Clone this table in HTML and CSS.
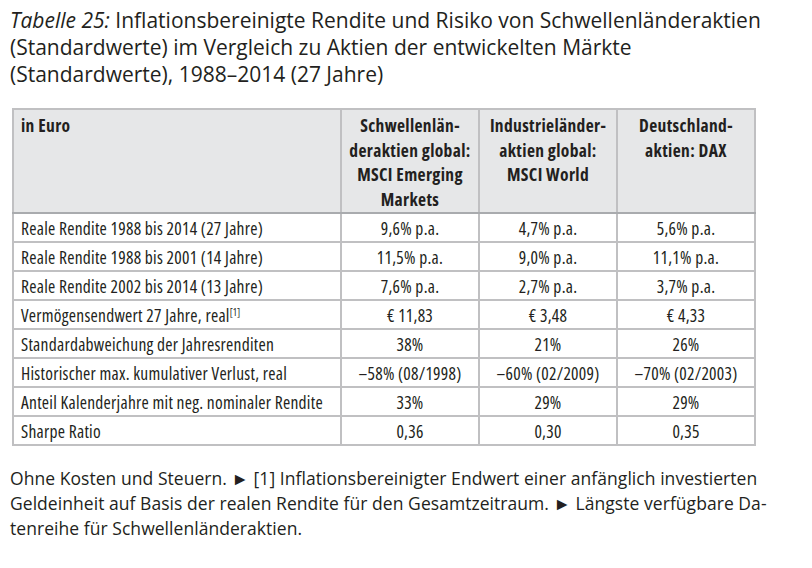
FILE: index.html
```html
<!DOCTYPE html>
<html lang="de">
<head>
<meta charset="utf-8">
<title>Tabelle 25</title>
<link rel="stylesheet" href="styles.css">
</head>
<body>
<div class="page">
  <h1 class="caption"><em>Tabelle 25:</em> Inflationsbereinigte Rendite und Risiko von Schwellenländeraktien<br>(Standardwerte) im Vergleich zu Aktien der entwickelten Märkte<br>(Standardwerte), 1988–2014 (27 Jahre)</h1>
  <table class="data">
    <colgroup>
      <col class="c-label"><col class="c-val"><col class="c-val"><col class="c-val">
    </colgroup>
    <thead>
      <tr>
        <th class="lbl">in Euro</th>
        <th>Schwellenlän-<br>deraktien global:<br>MSCI Emerging<br>Markets</th>
        <th>Industrieländer-<br>aktien global:<br>MSCI World</th>
        <th>Deutschland-<br>aktien: DAX</th>
      </tr>
    </thead>
    <tbody>
      <tr><td class="lbl">Reale Rendite 1988 bis 2014 (27 Jahre)</td><td>9,6% p.a.</td><td>4,7% p.a.</td><td>5,6% p.a.</td></tr>
      <tr><td class="lbl">Reale Rendite 1988 bis 2001 (14 Jahre)</td><td>11,5% p.a.</td><td>9,0% p.a.</td><td>11,1% p.a.</td></tr>
      <tr><td class="lbl">Reale Rendite 2002 bis 2014 (13 Jahre)</td><td>7,6% p.a.</td><td>2,7% p.a.</td><td>3,7% p.a.</td></tr>
      <tr><td class="lbl">Vermögensendwert 27 Jahre, real<sup>[1]</sup></td><td>€ 11,83</td><td>€ 3,48</td><td>€ 4,33</td></tr>
      <tr><td class="lbl">Standardabweichung der Jahresrenditen</td><td>38%</td><td>21%</td><td>26%</td></tr>
      <tr><td class="lbl">Historischer max. kumulativer Verlust, real</td><td>–58% (08/1998)</td><td>–60% (02/2009)</td><td>–70% (02/2003)</td></tr>
      <tr><td class="lbl">Anteil Kalenderjahre mit neg. nominaler Rendite</td><td>33%</td><td>29%</td><td>29%</td></tr>
      <tr><td class="lbl">Sharpe Ratio</td><td>0,36</td><td>0,30</td><td>0,35</td></tr>
    </tbody>
  </table>
  <p class="note">Ohne Kosten und Steuern. ► [1] Inflationsbereinigter Endwert einer anfänglich investierten Geldeinheit auf Basis der realen Rendite für den Gesamtzeitraum. ► Längste verfügbare Da&shy;tenreihe für Schwellenländeraktien.</p>
</div>
</body>
</html>
```

FILE: styles.css
```css
html, body {
  margin: 0;
  padding: 0;
  background: #ffffff;
  color: #231f20;
}

.page {
  padding: 7px 0 0 10px;
  width: 760px;
}

.caption {
  margin: 0;
  font-family: "Open Sans", "Noto Sans", sans-serif;
  font-stretch: 88%;
  font-weight: normal;
  font-size: 21px;
  line-height: 27px;
  white-space: nowrap;
  color: #231f20;
}

.caption em {
  font-style: italic;
}

.data {
  margin: 20px 0 0 2px;
  border-collapse: collapse;
  table-layout: fixed;
  width: 744px;
  font-family: "Open Sans", "Noto Sans", sans-serif;
  font-stretch: 84%;
  font-size: 17.5px;
  letter-spacing: 0.25px;
  color: #231f20;
}

.c-label { width: 328px; }
.c-val { width: 138px; }

.data th,
.data td {
  border: 2px solid #c0c0c2;
  text-align: center;
  padding: 0 3px;
}

.data th {
  background: #e6e7e8;
  font-weight: 700;
  font-stretch: 86%;
  letter-spacing: 0.35px;
  vertical-align: top;
  line-height: 24.5px;
  height: 97px;
  padding-top: 3px;
  padding-bottom: 1px;
  border-bottom-color: #a9abae;
}

.data td {
  height: 27px;
  line-height: 26px;
  white-space: nowrap;
}

.data .lbl {
  text-align: left;
  padding-left: 7px;
}

.data sup {
  font-size: 10px;
  line-height: 0;
  vertical-align: 6px;
  letter-spacing: 0;
}

.note {
  margin: 20px 0 0 0;
  font-family: "Open Sans", "Noto Sans", sans-serif;
  font-stretch: 93%;
  font-size: 17.5px;
  letter-spacing: 0.05px;
  line-height: 25px;
  color: #231f20;
  hyphens: manual;
}
```
